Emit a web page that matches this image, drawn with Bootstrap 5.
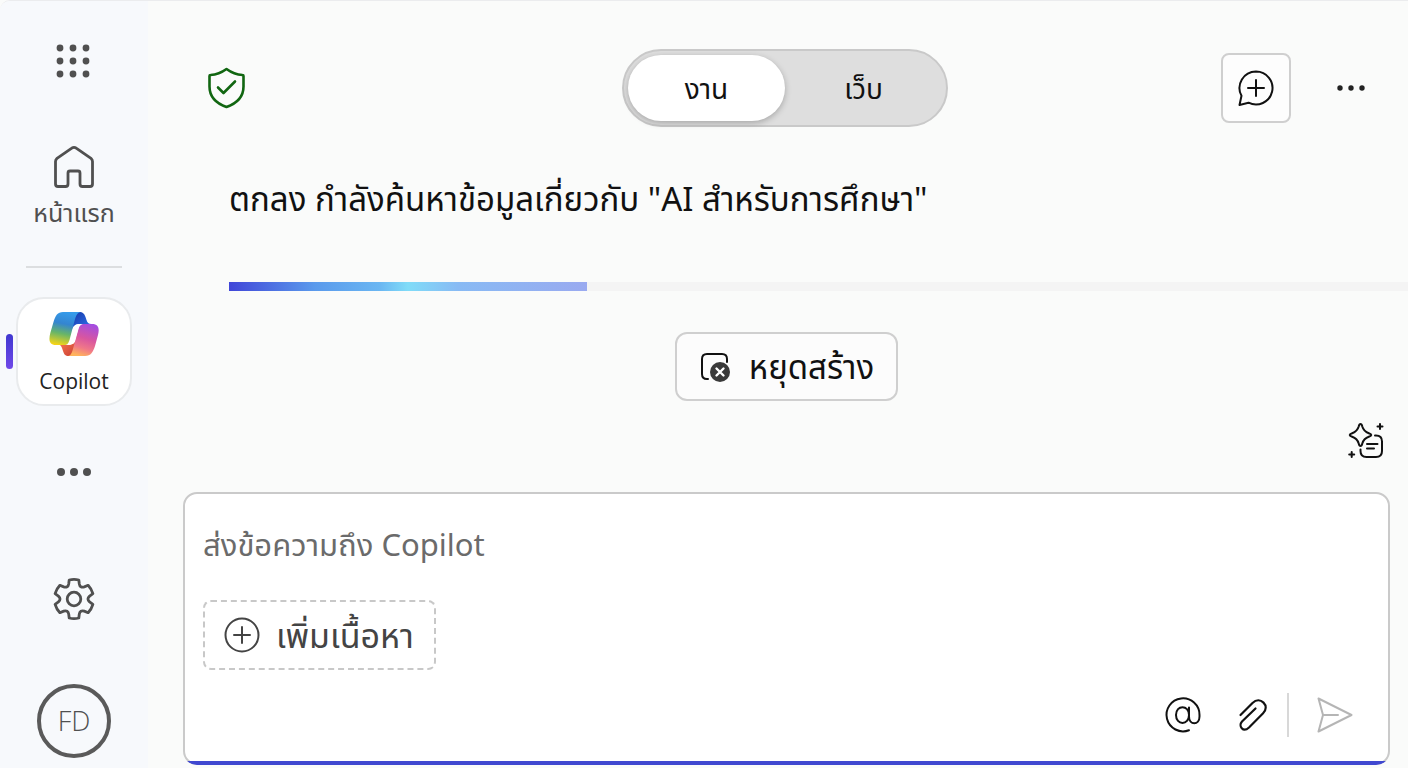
<!DOCTYPE html>
<html lang="th">
<head>
<meta charset="utf-8">
<meta name="viewport" content="width=device-width, initial-scale=1">
<title>Copilot</title>
<link href="https://cdn.jsdelivr.net/npm/bootstrap@5.3.0/dist/css/bootstrap.min.css" rel="stylesheet">
<style>
  body { font-family: "Noto Sans", "Noto Sans Thai", "Open Sans", sans-serif; background: #fafbfa; color: #111; }
  svg { display: block; fill: none; stroke: currentColor; stroke-linecap: round; stroke-linejoin: round; flex: none; }
  button { color: inherit; }
  .plain-btn { background: none; border: 0; padding: 0; }
  .app-frame { border-top: 1px solid #ebecee; border-radius: 10px 0 0 0; overflow: hidden; }
  .rail { width: 148px; background: #f7f9fc; color: #505050; padding: 40px 0 10px; }
  .rail a { color: inherit; text-decoration: none; }
  .rail-label { font-size: 25px; line-height: 38px; }
  .rail-home { margin-top: 60px; }
  .rail-rule { width: 96px; height: 2px; background: #dcdee0; margin-top: 35px; }
  .rail-app { width: 116px; height: 109px; margin-top: 29px; padding-top: 4px; border: 2px solid #e9ebed; border-radius: 28px; background: #fff; }
  .rail .rail-app-label { font-family: "Open Sans", sans-serif; font-size: 21px; line-height: 32px; color: #222; }
  .rail-marker { position: absolute; left: -12px; top: 35px; width: 7px; height: 35px; border-radius: 4px; background: linear-gradient(#4038d0, #7048e8); }
  .rail-more { margin-top: 52px; }
  .avatar { width: 74px; height: 74px; border: 4px solid #5a5a5a; border-radius: 50%; font-family: "Open Sans", sans-serif; font-size: 27px; font-weight: 300; margin-top: 62px; }
  .top-bar { display: grid; grid-template-columns: 1fr auto 1fr; align-items: center; padding: 48px 42px 0 56px; }
  .header-tools { gap: 45px; }
  .mode-switch { background: #dedede; border: 2px solid #c9c9c9; border-radius: 40px; padding: 4px; height: 78px; }
  .mode-switch button { width: 157px; border-radius: 36px; font-size: 28px; line-height: 32px; }
  .mode-switch .is-on { background: #fff; box-shadow: 0 2px 6px rgba(0,0,0,.25); }
  .new-chat { width: 70px; height: 70px; background: #fdfdfd; border: 2px solid #cfcfcf; border-radius: 8px; }
  .answer { padding: 48px 0 0 81px; }
  .answer p { font-size: 33px; line-height: 48px; }
  .answer .progress { height: 9px; margin-top: 59px; border-radius: 0; background: #f4f4f4; }
  .answer .progress-bar { background: linear-gradient(90deg, #4046d8, #5a9aec 24%, #6ab6f2 42%, #80dcf8 50%, #88baf4 64%, #9aaaf0); }
  .stop-row { padding: 41px 18px 0 35px; }
  .stop-btn { height: 69px; padding: 0 22px; gap: 18px; border: 2px solid #cfcfcf; border-radius: 12px; background: #fcfcfc; font-size: 33px; }
  .prompt-row { padding: 20px 22px 0 0; }
  .composer { position: relative; margin: 31px 18px 3px 35px; background: #fff; border: 2px solid #cacaca; border-radius: 14px; padding: 22px 35px 26px 18px; }
  .composer::after { content: ""; position: absolute; left: -2px; right: -2px; bottom: -2px; height: 14px; border-bottom: 4px solid #4048d0; border-radius: 0 0 14px 14px; clip-path: inset(10px 0 0 0); pointer-events: none; }
  .composer textarea { border: 0; outline: 0; resize: none; background: none; width: 100%; height: 56px; padding: 0; font-size: 31px; line-height: 56px; overflow: hidden; }
  .composer textarea::placeholder { color: #6b6b6b; opacity: 1; }
  .add-btn { height: 70px; margin-top: 28px; padding: 0 20px 0 19px; gap: 16px; color: #444; border: 2px dashed #c8c8c8; border-radius: 8px; background: none; font-size: 34px; line-height: 48px; }
  .tool-rule { width: 2px; height: 44px; background: #d8d8d8; }
</style>
</head>
<body>
<div class="app-frame d-flex min-vh-100">
  <nav class="rail d-flex flex-column align-items-center flex-shrink-0" aria-label="Copilot">
    <button class="plain-btn" type="button" aria-label="แอป">
      <svg width="40" height="40" viewBox="0 0 40 40" style="fill:currentColor;stroke:none"><circle cx="6" cy="7" r="3.400"/><circle cx="19" cy="7" r="3.400"/><circle cx="32" cy="7" r="3.400"/><circle cx="6" cy="20" r="3.400"/><circle cx="19" cy="20" r="3.400"/><circle cx="32" cy="20" r="3.400"/><circle cx="6" cy="33" r="3.400"/><circle cx="19" cy="33" r="3.400"/><circle cx="32" cy="33" r="3.400"/></svg>
    </button>
    <a href="#" class="rail-home d-flex flex-column align-items-center">
      <svg width="44" height="52" viewBox="0 0 44 52" stroke-width="2.800"><path d="M3.500 20.500q0-2 1.500-3.200L19.800 7.200q2.200-1.700 4.400 0L39 17.300q1.500 1.200 1.500 3.200V43q0 2.500-2.500 2.500h-7.500q-2.500 0-2.500-2.500V32q0-2-2-2h-8q-2 0-2 2v11q0 2.500-2.500 2.500H6Q3.500 45.500 3.500 43z"/></svg>
      <span class="rail-label">หน้าแรก</span>
    </a>
    <div class="rail-rule"></div>
    <a href="#" class="rail-app position-relative d-flex flex-column align-items-center justify-content-center" aria-current="page">
      <span class="rail-marker"></span>
      <svg width="50" height="46" viewBox="0 0 50 46" style="stroke:none">
        <defs>
          <linearGradient id="coolBand" x1=".5" y1="0" x2=".3" y2="1"><stop offset="0" stop-color="#359bea"/><stop offset=".35" stop-color="#3485d0"/><stop offset=".65" stop-color="#68b568"/><stop offset="1" stop-color="#f5d418"/></linearGradient>
          <linearGradient id="warmBand" x1=".7" y1="0" x2=".4" y2="1"><stop offset="0" stop-color="#a44de0"/><stop offset=".45" stop-color="#d856a0"/><stop offset=".75" stop-color="#f07888"/><stop offset="1" stop-color="#ffb35c"/></linearGradient>
          <linearGradient id="blueFold" x1="0" y1="0" x2="1" y2="1"><stop offset="0" stop-color="#1638a8"/><stop offset="1" stop-color="#2f74ee"/></linearGradient>
          <linearGradient id="redFold" x1="0" y1="0" x2="1" y2="1"><stop offset="0" stop-color="#ff8052"/><stop offset="1" stop-color="#c83c34"/></linearGradient>
        </defs>
        <path fill="url(#blueFold)" d="M24 1h6c4 0 5.500 2 6.500 5l1 3c.8 2.600 2 4 5 4H31c-4 0-6 1-8 5z"/>
        <path fill="url(#redFold)" d="M27 45h-7c-4 0-5-2-6-5l-1-3c-.8-2.600-2-3.600-5-3.600h12c4 0 6-1 8-6z"/>
        <path fill="url(#coolBand)" d="M32 1H14C8.500 1 6.500 4.500 4.500 11L1.300 22C-.2 28-.5 34 7 34h8c3.500 0 4.500-2 5.500-5l5-19c1.500-5.500 3-9 6.500-9z"/>
        <path fill="url(#warmBand)" d="M19 45h17c6 0 8-4 10-10l3-11c1.500-6 1-11-6-11h-8c-3.500 0-4.500 2-5.500 5l-5 18c-1.500 5.500-2.500 9-5.500 9z"/>
        <path fill="#fff" d="M35 13h-4c-4.500 0-6 2-7.200 6.500l-2.300 9C20.500 32 19 34 15 34h4c4 0 6-1.500 7.200-5.500l3-10.500c.9-3.500 2.300-5 5.800-5z"/>
      </svg>
      <span class="rail-app-label mt-2">Copilot</span>
    </a>
    <button class="plain-btn rail-more" type="button" aria-label="เพิ่มเติม">
      <svg width="40" height="28" viewBox="0 0 40 28" style="fill:currentColor;stroke:none"><circle cx="7" cy="14" r="4"/><circle cx="20" cy="14" r="4"/><circle cx="33" cy="14" r="4"/></svg>
    </button>
    <button class="plain-btn mt-auto" type="button" aria-label="การตั้งค่า">
      <svg width="44" height="46" viewBox="-22 -23 44 46" stroke-width="2.800"><circle r="6.800"/><path d="M-4.800-19Q0-20.200 4.800-19L5.300-15Q6-10.800 10.300-12.100L14.100-13.700Q17.500-10.100 18.900-5.300L15.600-2.900Q12.300 0 15.600 2.900L18.900 5.300Q17.500 10.100 14.100 13.700L10.300 12.100Q6 10.800 5.300 15L4.800 19Q0 20.200-4.800 19L-5.300 15Q-6 10.800-10.300 12.100L-14.100 13.700Q-17.500 10.100-18.900 5.300L-15.600 2.900Q-12.300 0-15.600-2.900L-18.900-5.300Q-17.500-10.100-14.100-13.700L-10.300-12.100Q-6-10.800-5.300-15z"/></svg>
    </button>
    <button class="plain-btn avatar" type="button">FD</button>
  </nav>

  <main class="d-flex flex-column flex-grow-1">
    <header class="top-bar">
      <svg width="44" height="44" viewBox="0 0 44 44" stroke-width="2.600" color="#116611"><path d="M22.500 3Q30 8.500 38.500 9q1 0 1 1v10.500q0 14.500-17 20.500Q5.500 35 5.500 20.500V10q0-1 1-1Q15 8.500 22.500 3zM14 21.500l5.500 5.500L31 15.500"/></svg>
      <div class="mode-switch d-flex" role="group">
        <button class="plain-btn is-on" type="button" aria-pressed="true">งาน</button>
        <button class="plain-btn" type="button" aria-pressed="false">เว็บ</button>
      </div>
      <div class="header-tools d-flex justify-content-end align-items-center">
        <button class="new-chat d-flex align-items-center justify-content-center p-0" type="button" aria-label="แชทใหม่">
          <svg width="40" height="40" viewBox="0 0 40 40" stroke-width="2"><path d="M20 3.500a16.500 16.500 0 1 1-7.500 31.200L3.500 37l2-9.200A16.500 16.500 0 0 1 20 3.500zM20 12v16M12 20h16"/></svg>
        </button>
        <button class="plain-btn" type="button" aria-label="ตัวเลือก">
          <svg width="30" height="30" viewBox="0 0 30 30" style="fill:#222;stroke:none"><circle cx="4" cy="15" r="2.700"/><circle cx="15" cy="15" r="2.700"/><circle cx="26" cy="15" r="2.700"/></svg>
        </button>
      </div>
    </header>

    <section class="answer">
      <p class="mb-0">ตกลง กำลังค้นหาข้อมูลเกี่ยวกับ "AI สำหรับการศึกษา"</p>
      <div class="progress" role="progressbar" aria-valuenow="30" aria-valuemin="0" aria-valuemax="100" aria-label="กำลังค้นหา"><div class="progress-bar" style="width:30.400%"></div></div>
    </section>
    <div class="stop-row d-flex justify-content-center">
      <button class="stop-btn d-flex align-items-center" type="button">
        <svg width="32" height="32" viewBox="0 0 32 32" stroke-width="2"><path d="M9 28H8q-5 0-5-5V8q0-5 5-5h15q5 0 5 5v3"/><circle cx="21" cy="21" r="10" fill="#3a3a3a" stroke="none"/><path d="M17.500 17.500l7 7m0-7l-7 7" stroke="#fff" stroke-width="2.400"/></svg>
        <span>หยุดสร้าง</span>
      </button>
    </div>
    <div class="prompt-row d-flex justify-content-end">
      <button class="plain-btn" type="button" aria-label="พร้อมท์">
        <svg width="40" height="40" viewBox="0 0 40 40" stroke-width="2"><path d="M14.500 3q1.200 0 1.800 2.500 1.500 5 6.500 6.700 2.500.8 2.500 1.800t-2.500 1.800q-5 1.700-6.500 6.700-.6 2.500-1.800 2.500t-1.800-2.500q-1.500-5-6.500-6.700Q3.700 15 3.700 14t2.500-1.800q5-1.700 6.500-6.700Q13.300 3 14.500 3zM29 14.500h1q6 0 6 6V30q0 6-6 6H20.500q-6 0-6-6v-1.500M21 23h10.500M21 27.500h7M34 3v5M31.500 5.500h5M5.700 31v5M3.200 33.500h5"/></svg>
      </button>
    </div>
    <form class="composer d-flex flex-column flex-grow-1">
      <textarea aria-label="ข้อความ" placeholder="ส่งข้อความถึง Copilot"></textarea>
      <button class="add-btn d-flex align-items-center align-self-start" type="button">
        <svg width="36" height="36" viewBox="0 0 36 36" stroke-width="2"><circle cx="18" cy="18" r="16.500"/><path d="M18 10v16M10 18h16"/></svg>
        <span>เพิ่มเนื้อหา</span>
      </button>
      <div class="d-flex justify-content-end align-items-center mt-auto">
        <button class="plain-btn me-4" type="button" aria-label="กล่าวถึง"><svg width="40" height="40" viewBox="0 0 40 40" stroke-width="2"><path d="M26 35.200A16.500 16.500 0 1 1 36.500 20v1.500c0 9-10.500 9-10.500 0V12.500M26 20c0 10.500-13 10.500-13 0S26 9.500 26 20z"/></svg></button>
        <button class="plain-btn ms-2 me-3" type="button" aria-label="แนบไฟล์"><svg width="36" height="40" viewBox="0 0 36 40" stroke-width="2.200"><path d="M5.500 20L17.500 8c3.800-3.500 8-3.300 11-.4s3 7.300-.4 10.700L14 32.500c-6 5.500-11-1.500-7-6L20.500 13.500"/></svg></button>
        <div class="tool-rule"></div>
        <button class="plain-btn ms-4" type="button" aria-label="ส่ง"><svg width="40" height="40" viewBox="0 0 40 40" stroke-width="2" color="#b5b5b5"><path d="M5.500 3.500l33 16.500-33 16.500L10 20zM10 20h15"/></svg></button>
      </div>
    </form>
  </main>
</div>
<script src="https://cdn.jsdelivr.net/npm/bootstrap@5.3.0/dist/js/bootstrap.bundle.min.js"></script>
</body>
</html>
